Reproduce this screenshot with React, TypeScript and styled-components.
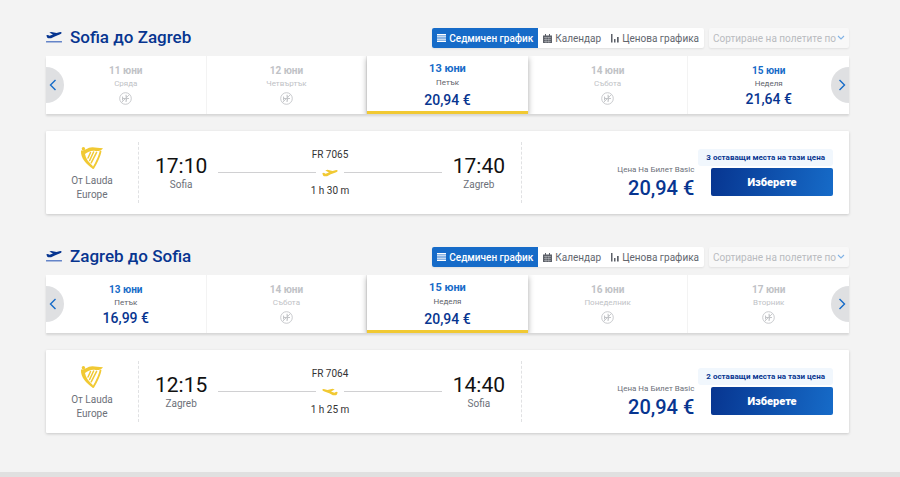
import React from "react";
import styled, { createGlobalStyle, css } from "styled-components";

const navy = "#073590";
const blue = "#166bc8";
const yellow = "#f1c933";

const GlobalStyle = createGlobalStyle`
  *, *::before, *::after { box-sizing: border-box; }
  html { background: #f3f3f3; }
  body { margin: 0; font-family: Roboto, "Liberation Sans", sans-serif; font-size: 10px; color: #333; }
  button, select { font: inherit; color: inherit; }
  h2, p { margin: 0; }
`;

const Page = styled.main`
  padding: 28px 51px 6px 46px;
`;

const Journey = styled.section`
  margin-bottom: 33px;
`;

const JourneyHeader = styled.header`
  display: flex;
  align-items: center;
  height: 20px;
  margin-bottom: 8px;
`;

const Title = styled.h2`
  display: flex;
  align-items: center;
  gap: 8px;
  flex: 1;
  padding-bottom: 2px;
  font-size: 17px;
  line-height: 20px;
  font-weight: 500;
  color: ${navy};
  white-space: nowrap;
`;

const ViewSwitch = styled.div`
  display: flex;
  height: 20px;
  margin-right: 5px;
  background: #fff;
  border-radius: 2px;
  box-shadow: 0 1px 2px rgba(0, 0, 0, 0.08);
`;

const ViewButton = styled.button<{ $active?: boolean }>`
  display: flex;
  align-items: center;
  gap: 3px;
  padding: 0 5px;
  border: 0;
  border-radius: 2px 0 0 2px;
  font-size: 10px;
  white-space: nowrap;
  background: ${(p) => (p.$active ? blue : "transparent")};
  color: ${(p) => (p.$active ? "#fff" : "#62666e")};
  font-weight: ${(p) => (p.$active ? 500 : 400)};
`;

const SortBox = styled.label`
  position: relative;
  display: flex;
  align-items: center;
  width: 140px;
  height: 20px;
  background: #f8f8f8;
  border-radius: 2px;
  box-shadow: 0 1px 2px rgba(0, 0, 0, 0.08);

  svg {
    position: absolute;
    right: 4px;
    pointer-events: none;
  }
`;

const SortSelect = styled.select`
  width: 100%;
  height: 20px;
  padding: 0 0 0 4px;
  border: 0;
  background: transparent;
  appearance: none;
  font-size: 10px;
  color: #b9bbbf;
  opacity: 1;
`;

const Carousel = styled.div`
  position: relative;
  height: 58px;
  margin-bottom: 17px;
  background: #fff;
  box-shadow: 0 2px 2px rgba(0, 0, 0, 0.12);
`;

const Days = styled.div`
  display: grid;
  grid-template-columns: repeat(5, 1fr);
  height: 100%;
  overflow: hidden;
`;

const DayButton = styled.button<{ $selected?: boolean; $empty?: boolean }>`
  display: flex;
  flex-direction: column;
  align-items: center;
  padding: 8px 0 0;
  border: 0;
  border-right: 1px solid #f3f3f3;
  background: #fff;
  color: ${(p) => (p.$empty ? "#c0c2c6" : "#5f636b")};

  &:last-child {
    border-right: 0;
  }

  ${(p) =>
    p.$selected &&
    css`
      position: relative;
      padding-top: 6px;
      border-right: 0;
      border-bottom: 3px solid ${yellow};
      box-shadow: 0 2px 6px rgba(0, 0, 0, 0.35);
    `}
`;

const DayDate = styled.span<{ $selected?: boolean; $empty?: boolean }>`
  font-size: ${(p) => (p.$selected ? 11 : 10)}px;
  line-height: ${(p) => (p.$selected ? 14 : 13)}px;
  font-weight: 700;
  color: ${(p) => (p.$empty ? "inherit" : blue)};
`;

const DayName = styled.span`
  font-size: 8px;
  line-height: 13px;
`;

const DayPrice = styled.span<{ $selected?: boolean }>`
  margin-top: ${(p) => (p.$selected ? 3 : 1)}px;
  font-size: 14px;
  line-height: 16px;
  font-weight: 500;
  color: ${navy};
`;

const NoFlight = styled.span`
  display: flex;
  margin-top: 2px;
`;

const Arrow = styled.button<{ $side: "left" | "right" }>`
  position: absolute;
  top: 11px;
  ${(p) => p.$side}: 0;
  display: flex;
  align-items: center;
  justify-content: center;
  width: 18px;
  height: 36px;
  padding: ${(p) => (p.$side === "left" ? "0 4px 0 0" : "0 0 0 4px")};
  border: 0;
  border-radius: ${(p) => (p.$side === "left" ? "0 18px 18px 0" : "18px 0 0 18px")};
  background: #dfe0e2;
`;

const FlightCard = styled.article`
  display: grid;
  grid-template-columns: 93fr 383fr 327fr;
  padding: 11px 0;
  background: #fff;
  border-radius: 1px;
  box-shadow: 0 1px 3px rgba(0, 0, 0, 0.18);
`;

const Carrier = styled.div`
  display: flex;
  flex-direction: column;
  align-items: center;
  gap: 4px;
  height: 61px;
  padding-top: 4px;
  border-right: 1px dashed #e0e1e3;
  text-align: center;
  line-height: 14px;
  color: #6c7078;
`;

const CarrierName = styled.p`
  width: 50px;
`;

const Route = styled.div`
  display: flex;
  align-items: center;
  gap: 11px;
  padding: 0 16px;
  border-right: 1px dashed #e0e1e3;
`;

const Stop = styled.div`
  text-align: center;
`;

const Time = styled.div`
  font-size: 21px;
  line-height: 24px;
  color: #111;
`;

const City = styled.div`
  line-height: 14px;
  color: #6c7078;
`;

const Middle = styled.div`
  display: flex;
  flex: 1;
  flex-direction: column;
  text-align: center;
  line-height: 14px;
  color: #333;
`;

const Track = styled.div`
  display: flex;
  align-items: center;
  gap: 6px;
  height: 22px;

  &::before,
  &::after {
    content: "";
    flex: 1;
    height: 1px;
    background: #d0d0d2;
  }
`;

const Offer = styled.div`
  display: flex;
  align-items: flex-end;
  justify-content: flex-end;
  padding: 0 16px 7px 0;
`;

const Fare = styled.div`
  margin-bottom: -4px;
  text-align: right;
`;

const FareLabel = styled.div`
  font-size: 8px;
  line-height: 12px;
  color: #6c7078;
`;

const FarePrice = styled.div`
  font-size: 20px;
  line-height: 24px;
  font-weight: 500;
  color: ${navy};
`;

const Booking = styled.div`
  display: flex;
  flex-direction: column;
  align-items: flex-end;
  gap: 2px;
  margin-left: 4px;
`;

const SeatsLeft = styled.span`
  padding: 0 8px;
  border-radius: 3px;
  background: #f1f7fd;
  font-size: 8px;
  line-height: 17px;
  font-weight: 700;
  color: ${navy};
  white-space: nowrap;
`;

const SelectButton = styled.button`
  width: 122px;
  height: 28px;
  padding: 0;
  border: 0;
  border-radius: 2px;
  background: linear-gradient(100deg, ${navy}, ${blue});
  font-size: 11px;
  font-weight: 900;
  color: #fff;
`;

const Footer = styled.footer`
  height: 5px;
  background: #e0e0e0;
`;

const planePath =
  "M22 32 27 31 33 34 44 30 32 23 39 21 56 25 65 22Q72 20 73 24 73 28 66 30L50 36 38 42 30 42Q26 43 24 38Z";

const DepartIcon = () => (
  <svg width="16" height="12" viewBox="21 18 53 40" aria-hidden="true">
    <path d={planePath} fill={navy} />
    <path d="M21 52h53v4H21z" fill="#3f68bd" />
  </svg>
);

const PlaneIcon = ({ inbound }: { inbound?: boolean }) => (
  <svg width="16" height="8" viewBox="21 19 53 25" fill={yellow} aria-hidden="true">
    <path d={planePath} transform={inbound ? "translate(95 0) scale(-1 1)" : undefined} />
  </svg>
);

const HarpIcon = () => (
  <svg width="24" height="24" viewBox="0 0 24 24" aria-hidden="true">
    <g fill={yellow}>
      <circle cx="3.4" cy="2.8" r="1.7" />
      <path d="M1 4.5C4 5 6 3 9 1.8c4-1.5 8 .4 14 .4-1.4 2.2-4.200 3.200-7.500 2.700C11.500 4.200 8 5.500 5 8c.6 4.500 4 8.500 7.800 12l.4 3C6.500 18.500 .5 12.500 1 4.500z" />
    </g>
    <g fill="none" stroke={yellow} strokeLinecap="round">
      <path d="M10.500 6.500 8 12M13.600 6 9.600 14.500M16.600 6.300 11.200 16.800" strokeWidth="1.500" />
      <path d="M20.500 5.500C19.500 11 16.500 16.500 13.300 22" strokeWidth="1.800" />
    </g>
  </svg>
);

const ListIcon = () => (
  <svg width="9" height="8" viewBox="0 0 9 8" fill="#fff" aria-hidden="true">
    <path d="M0 0h9v1.400H0zM0 2.200h9v1.400H0zM0 4.400h9v1.400H0zM0 6.600h9v1.400H0z" />
  </svg>
);

const CalendarIcon = () => (
  <svg width="9" height="9" viewBox="0 0 9 9" aria-hidden="true">
    <path d="M0 1.500h9V9H0zM2 0h1v2H2zM6 0h1v2H6z" fill="#5d6169" />
    <path d="M1 3.500h7M1 5.500h7M1 7.500h7M3 3v6M5.800 3v6" stroke="#fff" strokeWidth=".3" />
  </svg>
);

const BarsIcon = () => (
  <svg width="8" height="9" viewBox="0 0 8 9" fill="#5d6169" aria-hidden="true">
    <path d="M0 0h1.500v8.500H0zM3 5h1.500v3.500H3zM6 3h1.700v5.500H6z" />
  </svg>
);

const ChevronDown = () => (
  <svg width="8" height="6" viewBox="0 0 8 6" fill="none" aria-hidden="true">
    <path d="m1 1 3 3 3-3" stroke="#80b2e5" strokeWidth="1.100" />
  </svg>
);

const ArrowIcon = ({ side }: { side: "left" | "right" }) => (
  <svg width="8" height="12" viewBox="0 0 8 12" fill="none" aria-hidden="true">
    <path d={side === "left" ? "M6.500 1 1.500 6l5 5" : "m1.500 1 5 5-5 5"} stroke={blue} strokeWidth="1.400" />
  </svg>
);

const NoFlightIcon = () => (
  <svg width="13" height="13" viewBox="0 0 13 13" fill="none" aria-hidden="true">
    <circle cx="6.500" cy="6.500" r="5.800" stroke="#c3c5c8" strokeWidth=".9" />
    <path d="M10.500 2.500 2.500 10.500" stroke="#c3c5c8" strokeWidth=".9" />
    <path d="M3 6h7v1H3zM6.500 2.800h1L8.300 6.200 7.500 10h-1l.2-3.500zM3 4.500h.8l.7 2-.7 2H3z" fill="#c3c5c8" />
  </svg>
);

type Day = { date: string; name: string; price?: string };
type Trip = {
  from: string;
  to: string;
  selected: string;
  days: Day[];
  depart: string;
  arrive: string;
  flight: string;
  duration: string;
  price: string;
  seats: number;
  inbound?: boolean;
};

const trips: Trip[] = [
  {
    from: "Sofia",
    to: "Zagreb",
    selected: "13 юни",
    days: [
      { date: "11 юни", name: "Сряда" },
      { date: "12 юни", name: "Четвъртък" },
      { date: "13 юни", name: "Петък", price: "20,94 €" },
      { date: "14 юни", name: "Събота" },
      { date: "15 юни", name: "Неделя", price: "21,64 €" },
    ],
    depart: "17:10",
    arrive: "17:40",
    flight: "FR 7065",
    duration: "1 h 30 m",
    price: "20,94 €",
    seats: 3,
  },
  {
    from: "Zagreb",
    to: "Sofia",
    selected: "15 юни",
    days: [
      { date: "13 юни", name: "Петък", price: "16,99 €" },
      { date: "14 юни", name: "Събота" },
      { date: "15 юни", name: "Неделя", price: "20,94 €" },
      { date: "16 юни", name: "Понеделник" },
      { date: "17 юни", name: "Вторник" },
    ],
    depart: "12:15",
    arrive: "14:40",
    flight: "FR 7064",
    duration: "1 h 25 m",
    price: "20,94 €",
    seats: 2,
    inbound: true,
  },
];

const DayCell = ({ day, selected }: { day: Day; selected: boolean }) => (
  <DayButton type="button" $selected={selected} $empty={!day.price} disabled={!day.price}>
    <DayDate $selected={selected} $empty={!day.price}>{day.date}</DayDate>
    <DayName>{day.name}</DayName>
    {day.price ? (
      <DayPrice $selected={selected}>{day.price}</DayPrice>
    ) : (
      <NoFlight><NoFlightIcon /></NoFlight>
    )}
  </DayButton>
);

const TripSection = ({ trip }: { trip: Trip }) => (
  <Journey>
    <JourneyHeader>
      <Title><DepartIcon />{trip.from} до {trip.to}</Title>
      <ViewSwitch>
        <ViewButton type="button" $active><ListIcon />Седмичен график</ViewButton>
        <ViewButton type="button"><CalendarIcon />Календар</ViewButton>
        <ViewButton type="button"><BarsIcon />Ценова графика</ViewButton>
      </ViewSwitch>
      <SortBox>
        <SortSelect aria-label="Сортиране на полетите по" disabled>
          <option>Сортиране на полетите по</option>
        </SortSelect>
        <ChevronDown />
      </SortBox>
    </JourneyHeader>
    <Carousel>
      <Days>
        {trip.days.map((day) => (
          <DayCell key={day.date} day={day} selected={day.date === trip.selected} />
        ))}
      </Days>
      <Arrow type="button" $side="left" aria-label="Предишни дни"><ArrowIcon side="left" /></Arrow>
      <Arrow type="button" $side="right" aria-label="Следващи дни"><ArrowIcon side="right" /></Arrow>
    </Carousel>
    <FlightCard>
      <Carrier>
        <HarpIcon />
        <CarrierName>От Lauda Europe</CarrierName>
      </Carrier>
      <Route>
        <Stop>
          <Time>{trip.depart}</Time>
          <City>{trip.from}</City>
        </Stop>
        <Middle>
          <div>{trip.flight}</div>
          <Track><PlaneIcon inbound={trip.inbound} /></Track>
          <div>{trip.duration}</div>
        </Middle>
        <Stop>
          <Time>{trip.arrive}</Time>
          <City>{trip.to}</City>
        </Stop>
      </Route>
      <Offer>
        <Fare>
          <FareLabel>Цена На Билет Basic</FareLabel>
          <FarePrice>{trip.price}</FarePrice>
        </Fare>
        <Booking>
          <SeatsLeft>{trip.seats} оставащи места на тази цена</SeatsLeft>
          <SelectButton type="button">Изберете</SelectButton>
        </Booking>
      </Offer>
    </FlightCard>
  </Journey>
);

export default function App() {
  return (
    <>
      <GlobalStyle />
      <Page>
        {trips.map((trip) => (
          <TripSection key={trip.flight} trip={trip} />
        ))}
      </Page>
      <Footer />
    </>
  );
}
